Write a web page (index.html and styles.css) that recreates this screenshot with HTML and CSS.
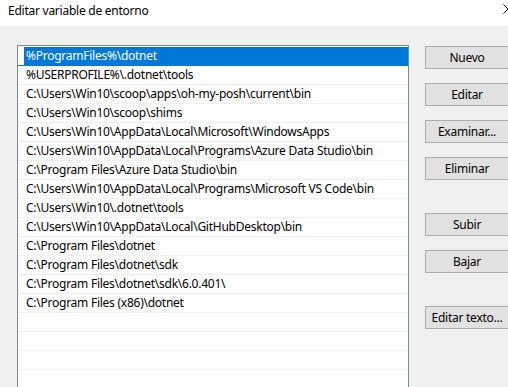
FILE: index.html
```html
<!DOCTYPE html>
<html lang="es">
<head>
<meta charset="utf-8">
<title>Editar variable de entorno</title>
<link rel="stylesheet" href="styles.css">
</head>
<body>
<div class="window">
  <div class="titlebar">
    <span class="title">Editar variable de entorno</span>
    <svg class="close" width="5" height="10" viewBox="0 0 5 10"><path d="M0.5 0.5 L5 5 L0.5 9.5" fill="none" stroke="#000" stroke-width="1"/></svg>
  </div>
  <div class="content">
    <div class="list">
      <div class="row sel"><span class="cell">%ProgramFiles%\dotnet</span></div>
      <div class="row"><span class="cell">%USERPROFILE%\.dotnet\tools</span></div>
      <div class="row"><span class="cell">C:\Users\Win10\scoop\apps\oh-my-posh\current\bin</span></div>
      <div class="row"><span class="cell">C:\Users\Win10\scoop\shims</span></div>
      <div class="row"><span class="cell">C:\Users\Win10\AppData\Local\Microsoft\WindowsApps</span></div>
      <div class="row"><span class="cell">C:\Users\Win10\AppData\Local\Programs\Azure Data Studio\bin</span></div>
      <div class="row"><span class="cell">C:\Program Files\Azure Data Studio\bin</span></div>
      <div class="row"><span class="cell">C:\Users\Win10\AppData\Local\Programs\Microsoft VS Code\bin</span></div>
      <div class="row"><span class="cell">C:\Users\Win10\.dotnet\tools</span></div>
      <div class="row"><span class="cell">C:\Users\Win10\AppData\Local\GitHubDesktop\bin</span></div>
      <div class="row"><span class="cell">C:\Program Files\dotnet</span></div>
      <div class="row"><span class="cell">C:\Program Files\dotnet\sdk</span></div>
      <div class="row"><span class="cell">C:\Program Files\dotnet\sdk\6.0.401\</span></div>
      <div class="row"><span class="cell">C:\Program Files (x86)\dotnet</span></div>
      <div class="row"><span class="cell"></span></div>
      <div class="row"><span class="cell"></span></div>
      <div class="row"><span class="cell"></span></div>
      <div class="row"><span class="cell"></span></div>
    </div>
    <div class="buttons">
      <button class="btn">Nuevo</button>
      <button class="btn">Editar</button>
      <button class="btn">Examinar...</button>
      <button class="btn">Eliminar</button>
      <button class="btn gap">Subir</button>
      <button class="btn">Bajar</button>
      <button class="btn gap">Editar texto...</button>
    </div>
  </div>
</div>
</body>
</html>
```

FILE: styles.css
```css
html, body {
  margin: 0;
  padding: 0;
  width: 508px;
  height: 387px;
  overflow: hidden;
  background: #f0f0f0;
  font-family: "Noto Sans", "Liberation Sans", sans-serif;
  font-size: 12px;
  letter-spacing: -0.25px;
  color: #000;
}

.window {
  display: flex;
  flex-direction: column;
}

.titlebar {
  height: 26px;
  box-sizing: border-box;
  background: #fff;
  display: flex;
  align-items: flex-start;
  padding: 3px 0 0 8px;
}

.title {
  line-height: 16px;
}

.close {
  margin-left: auto;
  margin-top: 1px;
  display: block;
}

.content {
  display: flex;
  align-items: flex-start;
  padding: 19px 0 0 17px;
  gap: 16px;
}

.list {
  width: 392px;
  height: 360px;
  box-sizing: border-box;
  background: #fff;
  border: 1px solid #828790;
  border-bottom: none;
  padding-top: 1px;
  flex: none;
}

.row {
  border-bottom: 1px solid #f0f0f0;
  padding-left: 6px;
}

.cell {
  display: block;
  height: 18px;
  line-height: 18px;
  padding-left: 2px;
  white-space: nowrap;
}

.row.sel {
  border-bottom-color: #0078d7;
}

.row.sel .cell {
  background: #0078d7;
  color: #fff;
}

.buttons {
  display: flex;
  flex-direction: column;
  gap: 14px;
  padding-top: 1px;
  flex: none;
}

.btn {
  width: 84px;
  height: 23px;
  box-sizing: border-box;
  margin: 0;
  padding: 0;
  background: #e1e1e1;
  border: 1px solid #adadad;
  font-family: inherit;
  font-size: 12px;
  letter-spacing: -0.25px;
  color: #000;
  line-height: 21px;
  text-align: center;
}

.btn.gap {
  margin-top: 19px;
}
```
